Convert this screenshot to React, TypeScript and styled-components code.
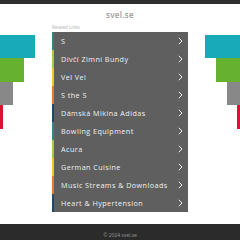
import styled, { createGlobalStyle } from 'styled-components';

const GlobalStyle = createGlobalStyle`
  html, body {
    margin: 0;
    padding: 0;
    background: #fff;
    font-family: "Open Sans", "Liberation Sans", sans-serif;
  }
`;

interface LinkItem {
  label: string;
  accent: string;
}

const links: LinkItem[] = [
  { label: 'S', accent: '#2b8a78' },
  { label: 'Dívčí Zimní Bundy', accent: '#a8c83a' },
  { label: 'Vel Vel', accent: '#f2c81e' },
  { label: 'S the S', accent: '#e8792a' },
  { label: 'Dámská Mikina Adidas', accent: '#1d4a66' },
  { label: 'Bowling Equipment', accent: '#2b8a88' },
  { label: 'Acura', accent: '#a8c83a' },
  { label: 'German Cuisine', accent: '#f2c81e' },
  { label: 'Music Streams & Downloads', accent: '#e8792a' },
  { label: 'Heart & Hypertension', accent: '#1d4a66' },
];

const bars = [
  { width: 35, height: 23, color: '#19aab9' },
  { width: 24, height: 24, color: '#67b131' },
  { width: 13, height: 23, color: '#888888' },
  { width: 3, height: 24, color: '#dd1133' },
];

const Page = styled.div`
  width: 240px;
  height: 240px;
  display: flex;
  flex-direction: column;
  overflow: hidden;
`;

const TopBar = styled.div`
  height: 4px;
  background: #2e2e2e;
`;

const Title = styled.div`
  height: 20px;
  line-height: 22px;
  text-align: center;
  font-size: 8px;
  font-weight: 600;
  letter-spacing: 0.3px;
  color: #9c9c9c;
`;

const Main = styled.div`
  flex: 1;
  display: grid;
  grid-template-columns: 52px 136px 52px;
`;

const Side = styled.div<{ $right?: boolean }>`
  display: flex;
  flex-direction: column;
  align-items: ${(p) => (p.$right ? 'flex-end' : 'flex-start')};
  padding-top: 11px;
`;

const Bar = styled.div<{ $w: number; $h: number; $c: string }>`
  width: ${(p) => p.$w}px;
  height: ${(p) => p.$h}px;
  background: ${(p) => p.$c};
`;

const Center = styled.div`
  display: flex;
  flex-direction: column;
`;

const Label = styled.div`
  height: 8px;
  font-size: 4.5px;
  line-height: 6px;
  color: #b0b0b0;
`;

const List = styled.ul`
  margin: 0;
  padding: 0;
  list-style: none;
  background: #5f5f5f;
`;

const Row = styled.li<{ $accent: string }>`
  height: 18px;
  display: flex;
  align-items: center;
  justify-content: space-between;
  border-left: 2px solid ${(p) => p.$accent};
  padding: 0 5px 0 7px;
  color: #f0f0f0;
  font-size: 7.2px;
  font-weight: 500;
  letter-spacing: 0.45px;
`;

const Chevron = () => (
  <svg width="5" height="8" viewBox="0 0 5 8">
    <polyline points="0.8,0.8 4,4 0.8,7.2" fill="none" stroke="#eeeeee" strokeWidth="1" />
  </svg>
);

const Footer = styled.div`
  height: 16px;
  background: #2b2b2b;
  text-align: center;
  font-size: 5px;
  line-height: 22px;
  color: #9a9a9a;
`;

const App = () => (
  <Page>
    <GlobalStyle />
    <TopBar />
    <Title>svel.se</Title>
    <Main>
      <Side>
        {bars.map((b) => (
          <Bar key={b.color} $w={b.width} $h={b.height} $c={b.color} />
        ))}
      </Side>
      <Center>
        <Label>Related Links</Label>
        <List>
          {links.map((l) => (
            <Row key={l.label} $accent={l.accent}>
              {l.label}
              <Chevron />
            </Row>
          ))}
        </List>
      </Center>
      <Side $right>
        {bars.map((b) => (
          <Bar key={b.color} $w={b.width} $h={b.height} $c={b.color} />
        ))}
      </Side>
    </Main>
    <Footer>© 2024 svel.se</Footer>
  </Page>
);

export default App;
